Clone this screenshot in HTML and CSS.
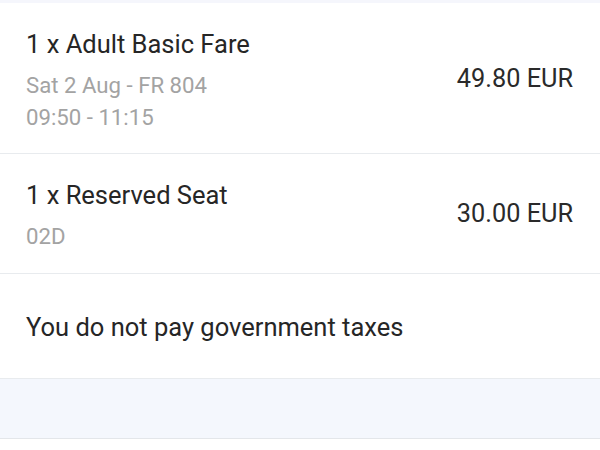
FILE: index.html
```html
<!DOCTYPE html>
<html>
<head>
<meta charset="utf-8">
<link rel="stylesheet" href="styles.css">
</head>
<body>
<div class="page">
  <div class="top-strip"></div>
  <div class="item item-fare">
    <div class="details">
      <div class="title">1 x Adult Basic Fare</div>
      <div class="sub">Sat 2 Aug - FR 804</div>
      <div class="sub">09:50 - 11:15</div>
    </div>
    <div class="price price-fare">49.80 EUR</div>
  </div>
  <div class="item item-seat">
    <div class="details">
      <div class="title">1 x Reserved Seat</div>
      <div class="sub">02D</div>
    </div>
    <div class="price price-seat">30.00 EUR</div>
  </div>
  <div class="item item-note">
    <div class="title">You do not pay government taxes</div>
  </div>
  <div class="band"></div>
  <div class="rest"></div>
</div>
</body>
</html>
```
FILE: styles.css
```css
html, body {
  margin: 0;
  padding: 0;
  background: #ffffff;
}
.page {
  width: 600px;
  height: 450px;
  overflow: hidden;
  font-family: Roboto, "Noto Sans", sans-serif;
  display: flex;
  flex-direction: column;
}
.top-strip {
  height: 3px;
  flex: none;
  background: #f5f6fc;
}
.item {
  display: flex;
  flex: none;
  justify-content: space-between;
  padding: 0 27px 0 26px;
  border-bottom: 1px solid #e8ebee;
}
.item-fare {
  padding-top: 25px;
  padding-bottom: 20px;
}
.item-seat {
  padding-top: 25px;
  padding-bottom: 21px;
}
.item-note {
  padding-top: 37px;
  padding-bottom: 35px;
}
.title {
  font-size: 25.5px;
  line-height: 32px;
  color: #262626;
  margin-bottom: 9px;
}
.item-note .title {
  margin-bottom: 0;
}
.sub {
  font-size: 22.2px;
  line-height: 32px;
  color: #a3a3a3;
}
.price {
  font-size: 25.3px;
  line-height: 32px;
  color: #2a2a2a;
}
.price-fare {
  margin-top: 35px;
}
.price-seat {
  margin-top: 19px;
}
.band {
  height: 59px;
  flex: none;
  background: #f4f7fd;
  border-bottom: 1px solid #e3e6ea;
}
.rest {
  flex: 1;
  background: #ffffff;
}
```
